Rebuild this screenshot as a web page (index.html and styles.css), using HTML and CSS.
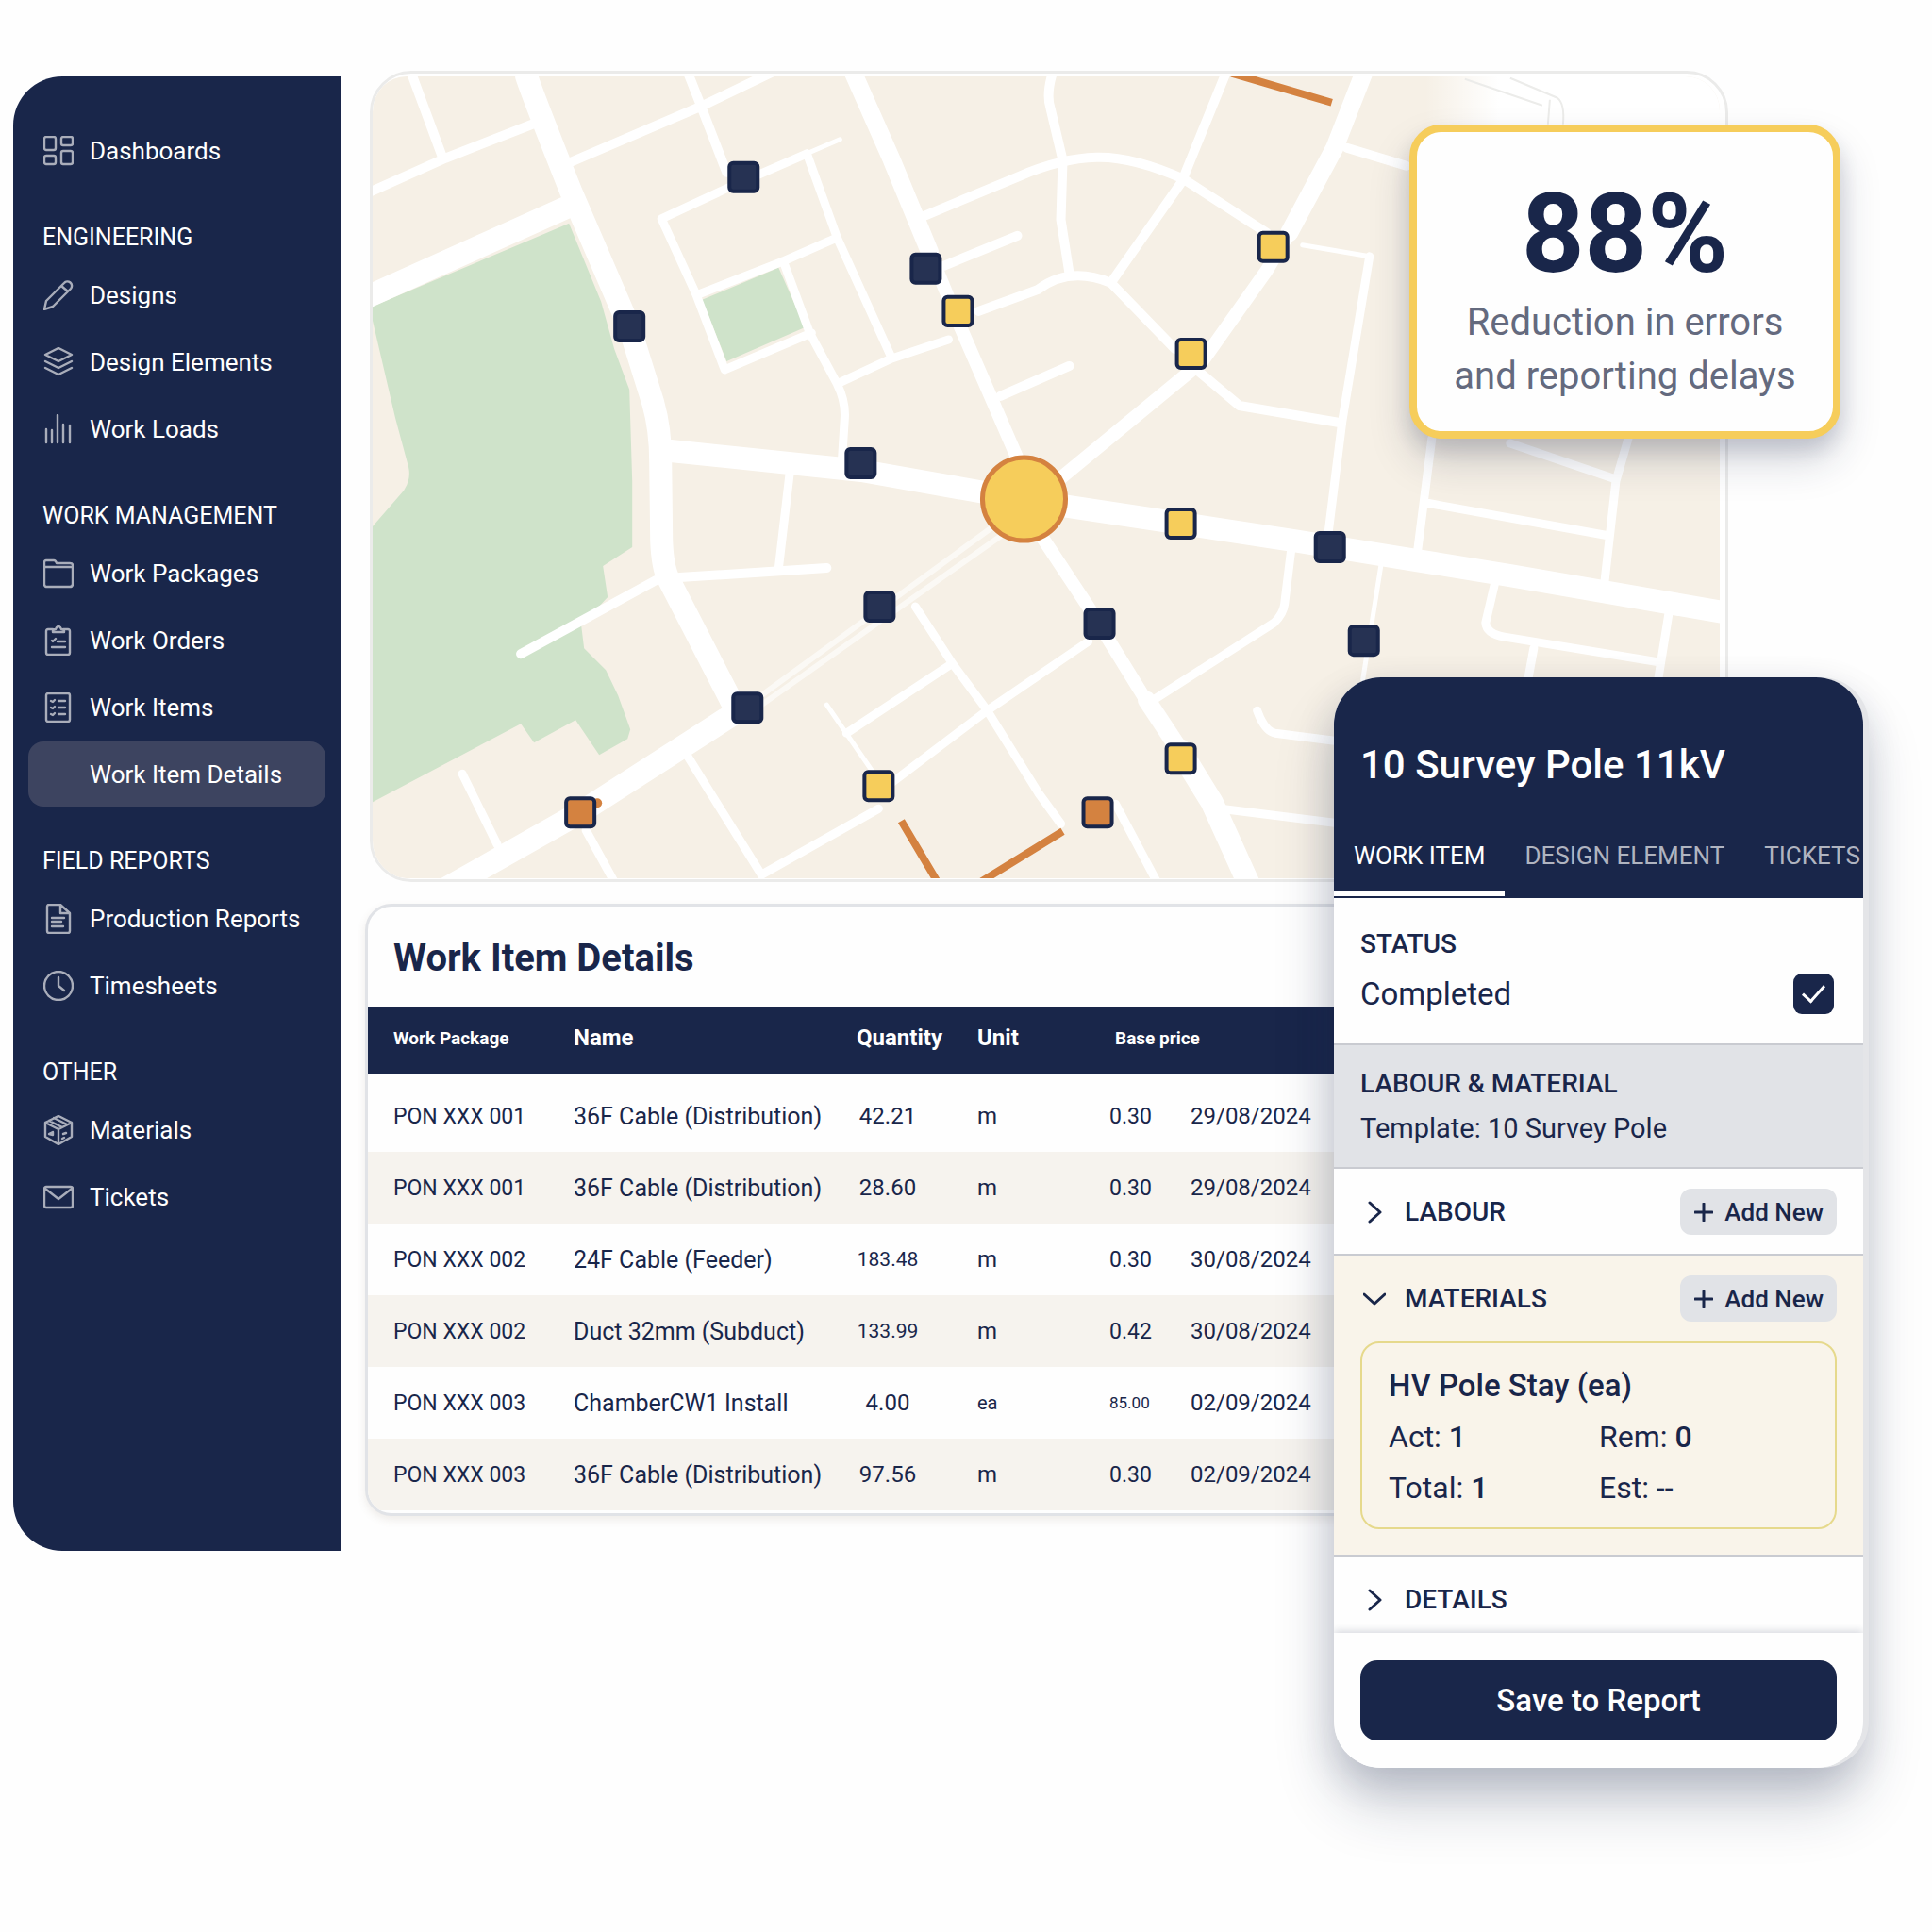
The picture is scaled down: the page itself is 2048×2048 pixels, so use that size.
FILE: index.html
```html
<!DOCTYPE html>
<html lang="en">
<head>
<meta charset="utf-8">
<meta name="viewport" content="width=device-width, initial-scale=1">
<title>Work Item Details</title>
<link rel="stylesheet" href="styles.css">
</head>
<body>
<div class="stage">
  <nav class="sidebar" aria-label="Main">
    <ul class="menu">
      <li><a class="menu-link" href="#"><svg class="icon" viewBox="0 0 32 32"><rect x="1" y="1" width="12" height="14" rx="2"/><rect x="19" y="1" width="12" height="9" rx="2"/><rect x="1" y="21" width="12" height="9" rx="2"/><rect x="19" y="16" width="12" height="14" rx="2"/></svg>Dashboards</a></li>
    </ul>
    <h2 class="menu-title">ENGINEERING</h2>
    <ul class="menu">
      <li><a class="menu-link" href="#"><svg class="icon" viewBox="0 0 32 32"><path d="M1 31l2-9L22 3a4.500 4.500 0 0 1 7 6L10 28zM19 6l7 6"/></svg>Designs</a></li>
      <li><a class="menu-link" href="#"><svg class="icon" viewBox="0 0 32 32"><path d="M16 1l14 7-14 7L2 8zM2 15l14 7 14-7M2 22l14 7 14-7"/></svg>Design Elements</a></li>
      <li><a class="menu-link" href="#"><svg class="icon" viewBox="0 0 32 32"><path d="M3 16v14M9 17v13M15 1v29M21 11v19M28 12v18"/></svg>Work Loads</a></li>
    </ul>
    <h2 class="menu-title">WORK MANAGEMENT</h2>
    <ul class="menu">
      <li><a class="menu-link" href="#"><svg class="icon" viewBox="0 0 32 32"><path d="M1 9V4q0-2 2-2h8q2 0 3 3h14q3 0 3 2v20q0 3-3 3H4q-3 0-3-3V9h30"/></svg>Work Packages</a></li>
      <li><a class="menu-link" href="#"><svg class="icon" viewBox="0 0 32 32"><path d="M10 4H5q-2 0-2 2v23q0 2 2 2h21q2 0 2-2V6q0-2-2-2h-5M10 6q0-2 3-2 1-3 3-3t3 3q3 0 3 2v1H10zM9 16l1 1 3-3M15 17h8M9 23h14"/></svg>Work Orders</a></li>
      <li><a class="menu-link" href="#"><svg class="icon" viewBox="0 0 32 32"><rect x="3" y="1" width="25" height="30" rx="2"/><path d="M8 9l2 1 2-2M16 9h7M8 16l2 1 2-2M16 16h7M8 23l2 1 2-2M16 23h7"/></svg>Work Items</a></li>
      <li><a class="menu-link is-current" href="#" aria-current="page">Work Item Details</a></li>
    </ul>
    <h2 class="menu-title">FIELD REPORTS</h2>
    <ul class="menu">
      <li><a class="menu-link" href="#"><svg class="icon" viewBox="0 0 32 32"><path d="M18 1H6q-2 0-2 2v26q0 2 2 2h20q2 0 2-2V10zV10h10M9 15h13M9 19h10M9 24h12"/></svg>Production Reports</a></li>
      <li><a class="menu-link" href="#"><svg class="icon" viewBox="0 0 32 32"><circle cx="16" cy="16" r="15"/><path d="M16 7v9l6 5"/></svg>Timesheets</a></li>
    </ul>
    <h2 class="menu-title">OTHER</h2>
    <ul class="menu">
      <li><a class="menu-link" href="#"><svg class="icon" viewBox="0 0 32 32"><path d="M16 1l14 7v15l-14 8-14-8V8zM2 8l14 7 14-7M16 15v16M6 6l14 7M11 3l14 7M6 20l4 1v-3zM21 20l3-1M20 25l2-1"/></svg>Materials</a></li>
      <li><a class="menu-link" href="#"><svg class="icon" viewBox="0 0 32 32"><rect x="1" y="5" width="30" height="22" rx="2"/><path d="M2 7l14 11L30 7"/></svg>Tickets</a></li>
    </ul>
  </nav>

  <main class="content">
    <section class="map" aria-label="Network map">
      <svg class="map-canvas" viewBox="395 81 1427 850" preserveAspectRatio="xMidYMid slice">
        <defs>
          <linearGradient id="haze" x1="0" x2="1"><stop offset="0" stop-color="#fff" stop-opacity="0"/><stop offset=".25" stop-color="#fff"/></linearGradient>
          <g id="site"><rect x="-15" y="-15" width="30" height="30" rx="4" stroke="#19264a" stroke-width="4"/></g>
        </defs>
        <rect x="395" y="81" width="1427" height="850" fill="#f6f0e6"/>
        <g fill="#cfe3ca">
          <path d="M395 325L603 237 637 320 651 370 667 413 670 510V580L639 600 644 633 616 663 619 687 642 710 655 737 668 773 665 783 635 800 610 763 566 787 552 767 395 850V558L428 520Q436 508 433 495L419 443 395 340z"/>
          <path d="M744 318L825 284 853 347 770 383z"/>
        </g>
        <g class="roads">
          <g stroke-width="24">
            <path d="M558 81Q564 100 605 203L667 347 692 427Q700 455 700 490L701 573Q702 600 708 613L775 743"/>
            <path d="M470 943L615 861 780 755"/>
            <path d="M380 319L605 218"/>
            <path d="M701 477L913 499 1060 525"/>
            <path d="M1120 535L1371 573 1600 610 1832 650"/>
            <path d="M1250 795L1284 850 1326 943"/>
          </g>
          <g stroke-width="19">
            <path d="M903 75L945 170 985 267"/>
            <path d="M1446 75L1414 157 1366 247"/>
            <path d="M1215 742L1250 795"/>
          </g>
          <g stroke-width="14">
            <path d="M985 267L1016 343 1082 495M1366 247L1342 287 1274 383 1120 510M1098 560L1153 643 1211 737"/>
          </g>
          <g stroke-width="10">
            <path d="M385 207L472 168 564 132M435 75L469 167M605 172L743 113 820 76M728 75L743 113 770 183"/>
            <path d="M977 230L1080 187Q1124 168 1162 167T1254 190L1342 247M1000 282L1078 250M1037 330L1100 307Q1133 282 1177 300L1245 370M1060 420L1133 388"/>
            <path d="M1116 75Q1108 100 1113 115L1126 170 1124 233 1133 290M1300 75L1252 193 1177 300M1427 157L1490 176M1269 393L1313 430 1419 448"/>
            <path d="M720 612L876 602M695 615L552 693"/>
          </g>
          <g stroke-width="9">
            <path d="M701 232L770 200 855 163M701 232L738 313 768 392 860 353M738 313L830 277 887 252M855 163L887 252 945 380M830 277L858 353 887 407Q896 425 895 443L892 490M887 407L945 380 1005 360"/>
            <path d="M1451 272L1422 447 1407 568M837 500L825 603M490 820L527 895M621 880L654 940M729 802L807 927 931 857M931 840L1046 753 1153 680"/>
            <path d="M970 643L1009 703 1046 753 1100 840 1124 873M1009 703L897 777M1368 583L1361 640Q1360 650 1350 660L1225 740M1332 753Q1340 775 1351 777L1414 785M1293 857L1414 872M1182 852L1226 935"/>
            <path d="M1517 465L1502 583M1511 533L1705 568M1725 465L1712 510 1700 617M1600 470L1712 508M1584 617L1574 660Q1575 672 1594 675L1759 702M1768 650L1756 725M1625 687L1618 725"/>
          </g>
          <g stroke-width="5">
            <path d="M1380 260L1451 272M1463 600L1453 663 1444 720M876 747L931 827M855 163L890 148"/>
          </g>
          <g stroke-width="6" stroke-opacity=".6">
            <path d="M800 742L1054 557M800 752L1062 567"/>
          </g>
        </g>
        <path d="M1510 81H1822V200H1510z" fill="url(#haze)"/>
        <path d="M1552 84L1634 112M1600 83L1650 104Q1658 110 1656 132M1642 106L1640 132" fill="none" stroke="#ececea" stroke-width="2"/>
        <g stroke="#d48240" stroke-width="8" fill="none">
          <path d="M1305 78L1411 109M955 870L993 934M1040 934L1126 881"/>
        </g>
        <circle cx="633" cy="851" r="5" fill="#d48240"/>
        <g fill="#263253">
          <use href="#site" x="788" y="188"/><use href="#site" x="981" y="285"/><use href="#site" x="667" y="346"/>
          <use href="#site" x="912" y="491"/><use href="#site" x="932" y="643"/><use href="#site" x="792" y="750"/>
          <use href="#site" x="1165" y="661"/><use href="#site" x="1409" y="580"/><use href="#site" x="1445" y="679"/>
        </g>
        <g fill="#f6cd5b">
          <use href="#site" x="1015" y="330"/><use href="#site" x="1349" y="262"/><use href="#site" x="1262" y="375"/>
          <use href="#site" x="1251" y="555"/><use href="#site" x="931" y="833"/><use href="#site" x="1251" y="804"/>
        </g>
        <g fill="#d48240"><use href="#site" x="615" y="861"/><use href="#site" x="1163" y="861"/></g>
        <circle cx="1085" cy="529" r="44" fill="#f6cd5b" stroke="#d48240" stroke-width="5"/>
      </svg>
    </section>

    <section class="panel">
      <h1 class="panel-title">Work Item Details</h1>
      <table class="items">
        <colgroup><col class="c-package"><col class="c-name"><col class="c-qty"><col class="c-unit"><col class="c-price"><col></colgroup>
        <thead>
          <tr><th class="small">Work Package</th><th>Name</th><th>Quantity</th><th>Unit</th><th class="small price-head" colspan="2">Base price</th></tr>
        </thead>
        <tbody>
          <tr><td>PON XXX 001</td><td>36F Cable (Distribution)</td><td>42.21</td><td>m</td><td>0.30</td><td>29/08/2024</td></tr>
          <tr><td>PON XXX 001</td><td>36F Cable (Distribution)</td><td>28.60</td><td>m</td><td>0.30</td><td>29/08/2024</td></tr>
          <tr><td>PON XXX 002</td><td>24F Cable (Feeder)</td><td class="long">183.48</td><td>m</td><td>0.30</td><td>30/08/2024</td></tr>
          <tr><td>PON XXX 002</td><td>Duct 32mm (Subduct)</td><td class="long">133.99</td><td>m</td><td>0.42</td><td>30/08/2024</td></tr>
          <tr><td>PON XXX 003</td><td>ChamberCW1 Install</td><td>4.00</td><td class="each">ea</td><td class="wide">85.00</td><td>02/09/2024</td></tr>
          <tr><td>PON XXX 003</td><td>36F Cable (Distribution)</td><td>97.56</td><td>m</td><td>0.30</td><td>02/09/2024</td></tr>
        </tbody>
      </table>
    </section>
  </main>

  <aside class="stat">
    <strong class="stat-value">88%</strong>
    <p class="stat-text">Reduction in errors<br>and reporting delays</p>
  </aside>

  <section class="phone">
    <header class="phone-head">
      <h2 class="phone-title">10 Survey Pole 11kV</h2>
      <div class="tabs" role="tablist">
        <button class="tab is-active" role="tab" aria-selected="true">WORK ITEM</button>
        <button class="tab" role="tab" aria-selected="false">DESIGN ELEMENT</button>
        <button class="tab" role="tab" aria-selected="false">TICKETS</button>
      </div>
    </header>
    <div class="block status">
      <h3 class="label">STATUS</h3>
      <div class="status-row">
        <label for="completed">Completed</label>
        <input class="check" type="checkbox" id="completed" checked>
      </div>
    </div>
    <div class="block template">
      <h3 class="label">LABOUR &amp; MATERIAL</h3>
      <p class="template-name">Template: 10 Survey Pole</p>
    </div>
    <div class="block fold">
      <div class="fold-row">
        <button class="toggle" aria-expanded="false"><svg class="chevron" viewBox="0 0 24 24"><path d="M7 2l11 10L7 22"/></svg>LABOUR</button>
        <button class="add"><svg class="plus" viewBox="0 0 20 20"><path d="M10 1v18M1 10h18"/></svg>Add New</button>
      </div>
    </div>
    <div class="block fold is-open">
      <div class="fold-row">
        <button class="toggle" aria-expanded="true"><svg class="chevron" viewBox="0 0 24 24"><path d="M1 7l11 10L23 7"/></svg>MATERIALS</button>
        <button class="add"><svg class="plus" viewBox="0 0 20 20"><path d="M10 1v18M1 10h18"/></svg>Add New</button>
      </div>
      <div class="material">
        <h4 class="material-name">HV Pole Stay (ea)</h4>
        <p>Act: <b>1</b></p><p>Rem: <b>0</b></p>
        <p>Total: <b>1</b></p><p>Est: --</p>
      </div>
    </div>
    <div class="fold details">
      <div class="fold-row">
        <button class="toggle" aria-expanded="false"><svg class="chevron" viewBox="0 0 24 24"><path d="M7 2l11 10L7 22"/></svg>DETAILS</button>
      </div>
    </div>
    <footer class="phone-foot"><button class="save">Save to Report</button></footer>
  </section>
</div>
</body>
</html>
```
FILE: styles.css
```css
:root {
  --navy: #19264a;
  --yellow: #f6cd5b;
  --orange: #d48240;
  --grey: #e1e3e7;
  --line: #c9cbd1;
}

* { box-sizing: border-box; }

body {
  margin: 0;
  min-height: 100vh;
  background: #fefefe;
  color: var(--navy);
  font-family: Roboto, "Liberation Sans", sans-serif;
}

h1, h2, h3, h4, p, ul { margin: 0; padding: 0; }
button { border: 0; font-family: inherit; color: inherit; cursor: pointer; }

.stage {
  position: relative;
  display: grid;
  grid-template-columns: 347px minmax(0, 1fr);
  column-gap: 26px;
  padding: 75px 216px 0 14px;
}

/* Sidebar */
.sidebar {
  margin-top: 6px;
  padding: 43px 16px;
  background: var(--navy);
  border-radius: 52px 0 0 52px;
  color: #fff;
}

.menu { display: grid; gap: 2px; padding: 1px 0; list-style: none; }

.menu-link {
  display: flex;
  align-items: center;
  gap: 17px;
  height: 69px;
  padding: 0 16px;
  border-radius: 16px;
  color: #fff;
  font-size: 26px;
  text-decoration: none;
}

.menu-link.is-current { padding-left: 65px; background: #3d4460; }

.menu-title {
  margin-top: 31px;
  padding-left: 15px;
  font-size: 25px;
  font-weight: 400;
  line-height: 51px;
}

.icon {
  width: 32px;
  height: 32px;
  fill: none;
  stroke: #a9adba;
  stroke-width: 2.4;
  stroke-linejoin: round;
  stroke-linecap: round;
}

/* Map */
.content {
  display: flex;
  flex-direction: column;
  gap: 23px;
  padding-bottom: 37px;
}

.map {
  margin-left: 5px;
  aspect-ratio: 1440 / 860;
  padding: 3px 6px 1px 0;
  border: 3px solid #ebebea;
  border-radius: 44px;
  background: #fff;
  overflow: hidden;
}

.map-canvas { display: block; width: 100%; height: 100%; border-radius: 36px; }
.roads { fill: none; stroke: #fff; stroke-linejoin: round; stroke-linecap: round; }

/* Table */
.panel {
  padding-bottom: 3px;
  border: 3px solid var(--grey);
  border-radius: 28px;
  background: #fefefe;
  box-shadow: 0 4px 10px rgb(120 100 70 / 12%);
  overflow: hidden;
}

.panel-title {
  padding: 3px 27px 0;
  font-size: 40px;
  font-weight: 700;
  line-height: 103px;
}

.items {
  width: 100%;
  table-layout: fixed;
  border-collapse: collapse;
  font-size: 24px;
  white-space: nowrap;
}

.c-package { width: 218px; }
.c-name { width: 300px; }
.c-qty { width: 128px; }
.c-unit { width: 140px; }
.c-price { width: 86px; }

.items th, .items td { padding: 0; text-align: left; }
.items th { height: 72px; padding-bottom: 6px; background: var(--navy); color: #fff; font-weight: 700; }
.items th.small { font-size: 19px; }
.items th.price-head { padding-left: 6px; }
.items td { height: 76px; }
.items tr > :first-child { padding-left: 27px; }
.items td:first-child { font-size: 23px; }
.items td:nth-child(2) { font-size: 25px; }
.items tbody tr:first-child td { height: 82px; padding-top: 6px; }
.items tbody tr:nth-child(even) { background: #f6f3ee; }
.items td:nth-child(3) { padding-right: 62px; text-align: center; }
.items td:nth-child(5) { font-size: 23px; }
.items td.long { font-size: 21px; }
.items td.each { font-size: 20px; }
.items td.wide { font-size: 17px; }

/* Floating figure */
.stat {
  position: absolute;
  top: 132px;
  right: 97px;
  width: 457px;
  padding: 43px 0 30px;
  border: 8px solid var(--yellow);
  border-radius: 34px;
  background: #fefefe;
  box-shadow: 0 12px 20px rgb(25 38 74 / 14%), 0 24px 44px rgb(25 38 74 / 18%);
  text-align: center;
}

.stat-value { display: block; font-size: 116px; font-weight: 700; line-height: 130px; }
.stat-text { color: #646a7e; font-size: 40px; line-height: 57px; }

/* Phone */
.phone {
  position: absolute;
  top: 718px;
  right: 73px;
  width: 561px;
  border-radius: 50px;
  background: #fefefe;
  box-shadow: 6px 0 0 #e4e5e8, 0 16px 40px rgb(25 38 74 / 18%), 0 40px 64px rgb(25 38 74 / 20%);
  overflow: hidden;
}

.phone-head { padding: 68px 0 2px; background: var(--navy); color: #fff; }
.phone-title { padding: 0 28px; font-size: 42px; font-weight: 500; line-height: 50px; }
.tabs { display: flex; margin-top: 34px; }

.tab {
  flex: none;
  height: 80px;
  padding: 0 21px;
  border-bottom: 6px solid transparent;
  background: none;
  color: #b0b4c0;
  font-size: 26px;
}

.tab.is-active { border-color: #fff; color: #fff; }

.block { border-bottom: 2px solid var(--line); }
.label { font-size: 28px; font-weight: 500; line-height: 34px; }

.status { padding: 32px 31px 31px 28px; }

.status-row {
  display: flex;
  align-items: center;
  justify-content: space-between;
  margin-top: 14px;
  font-size: 33px;
  line-height: 43px;
}

.check {
  display: grid;
  place-items: center;
  width: 43px;
  height: 43px;
  margin: 0;
  border-radius: 9px;
  background: var(--navy);
  appearance: none;
}

.check:checked::before {
  content: "";
  width: 10px;
  height: 20px;
  margin-bottom: 6px;
  border: solid #fff;
  border-width: 0 3px 3px 0;
  rotate: 42deg;
}

.template { padding: 24px 28px; background: var(--grey); }
.template-name { margin-top: 13px; font-size: 29px; line-height: 34px; }

.fold { padding: 21px 28px 20px; }
.fold-row { display: flex; align-items: center; justify-content: space-between; height: 49px; }

.toggle {
  display: flex;
  align-items: center;
  gap: 20px;
  padding: 0 0 0 3px;
  background: none;
  font-size: 28px;
  font-weight: 500;
}

.chevron, .plus { fill: none; stroke: var(--navy); stroke-width: 3; stroke-linecap: round; stroke-linejoin: round; }
.chevron { width: 24px; height: 24px; }
.plus { width: 20px; height: 20px; }

.add {
  display: flex;
  align-items: center;
  gap: 12px;
  height: 49px;
  padding: 0 14px 0 15px;
  border-radius: 12px;
  background: var(--grey);
  font-size: 26px;
  font-weight: 500;
}

.is-open { padding-bottom: 27px; background: #f9f4ea; }

.material {
  display: grid;
  grid-template-columns: 223px 1fr;
  margin-top: 21px;
  padding: 18px 28px 15px;
  border: 2px solid #e6d98c;
  border-radius: 20px;
  font-size: 32px;
  line-height: 54px;
}

.material-name { grid-column: 1 / -1; font-size: 33px; font-weight: 500; }
.material b { font-weight: 500; }

.details { padding-bottom: 11px; }

.phone-foot {
  padding: 29px 28px;
  background: #fefefe;
  box-shadow: 0 -2px 8px rgb(25 38 74 / 18%);
}

.save {
  width: 100%;
  height: 85px;
  border-radius: 18px;
  background: var(--navy);
  color: #fff;
  font-size: 33px;
  font-weight: 500;
}
```
